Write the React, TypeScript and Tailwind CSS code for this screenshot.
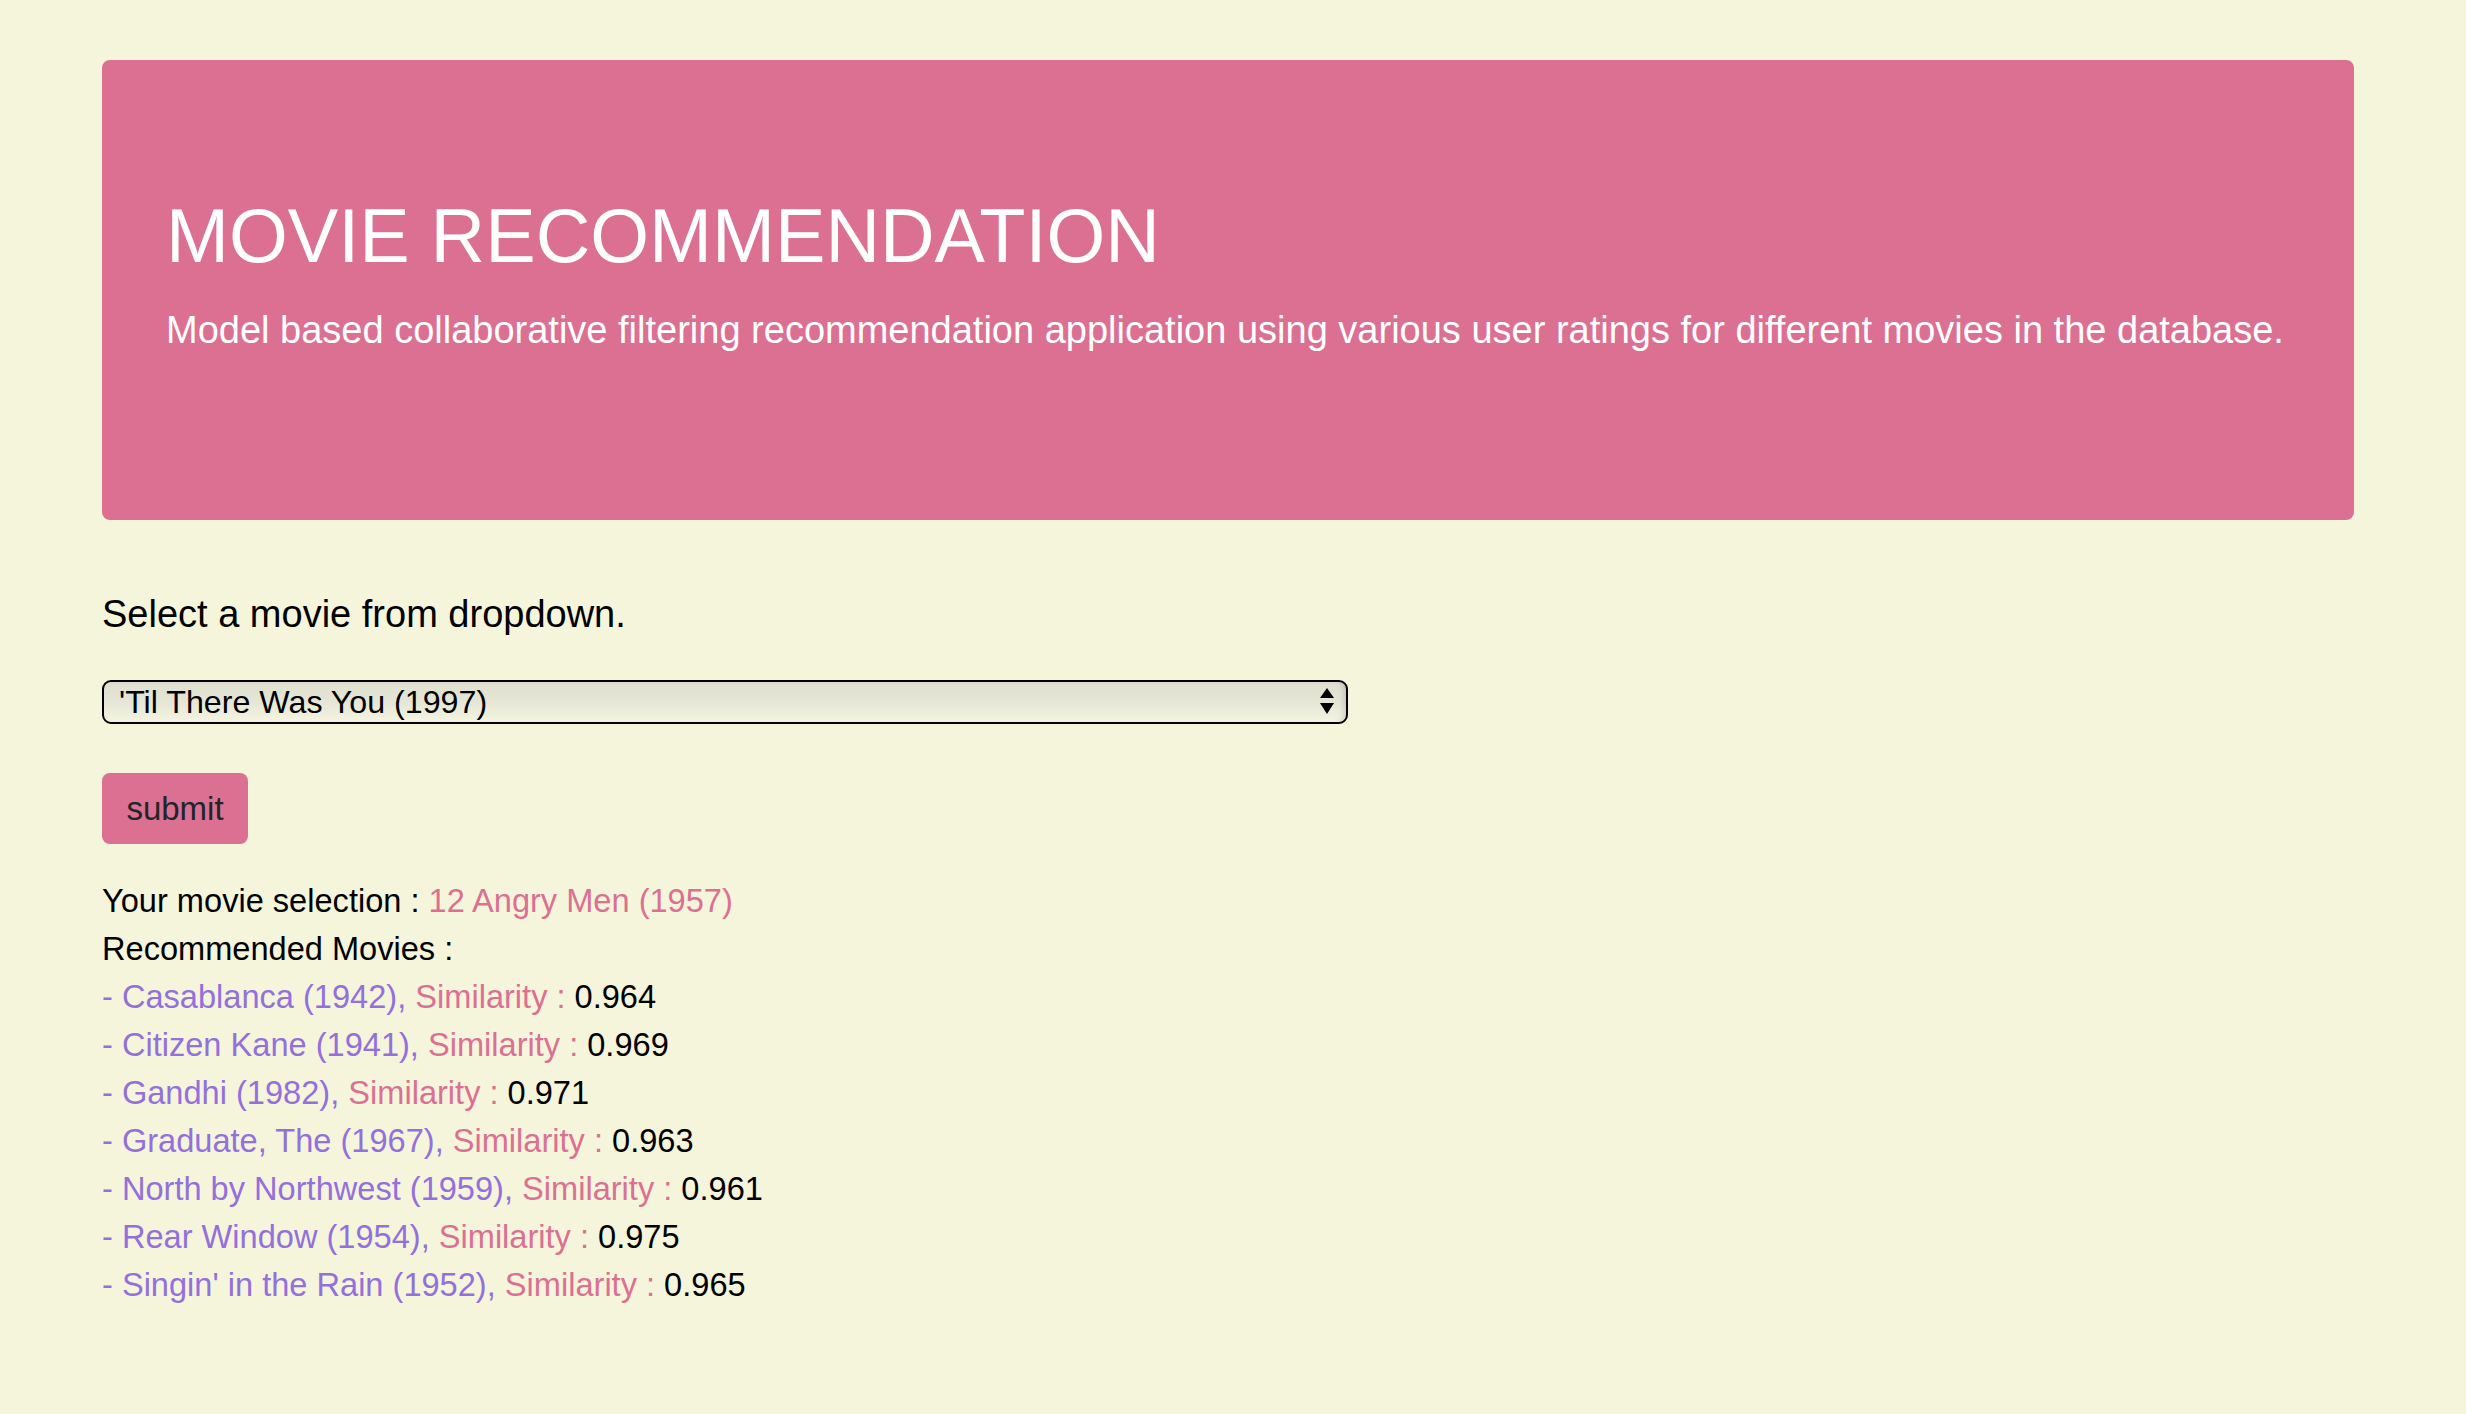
import React, { useState } from 'react';

const recommendations = [
  { title: 'Casablanca (1942)', score: '0.964' },
  { title: 'Citizen Kane (1941)', score: '0.969' },
  { title: 'Gandhi (1982)', score: '0.971' },
  { title: 'Graduate, The (1967)', score: '0.963' },
  { title: 'North by Northwest (1959)', score: '0.961' },
  { title: 'Rear Window (1954)', score: '0.975' },
  { title: "Singin' in the Rain (1952)", score: '0.965' },
];

const movies = ["'Til There Was You (1997)", '12 Angry Men (1957)', 'Casablanca (1942)'];

const App: React.FC = () => {
  const [movie, setMovie] = useState(movies[0]);

  return (
    <div className="min-h-screen bg-[#f5f5dc] font-['Liberation_Sans',Arial,sans-serif] text-black">
      <div className="ml-[102px] w-[2252px] pt-[60px] pb-[60px]">
        {/* Header */}
        <div className="bg-[#db7093] rounded-[8px] px-[64px] py-[128px] mb-[64px]">
          <h1 className="text-[75.6px] leading-[96px] text-white mb-[16px]">MOVIE RECOMMENDATION</h1>
          <p className="text-[38px] leading-[60px] text-white mb-[32px]">
            Model based collaborative filtering recommendation application using various user ratings for different movies in the database.
          </p>
        </div>

        <p className="text-[38px] leading-[60px]">Select a movie from dropdown.</p>

        <div className="relative mt-[36px] w-[1246px]">
          <select
            value={movie}
            onChange={e => setMovie(e.target.value)}
            className="appearance-none w-full h-[44px] border-2 border-black rounded-[9px] pl-[15px] text-[32.2px] leading-[40px] text-black bg-gradient-to-b from-[#dfdfd0] via-[#e6e6d6] to-[#f4f4e0] shadow-[inset_-6px_0_6px_-4px_rgba(0,0,0,0.15)] outline-none font-['Liberation_Sans',Arial,sans-serif]"
          >
            {movies.map(m => (
              <option key={m} value={m}>{m}</option>
            ))}
          </select>
          <div className="absolute right-[14px] top-[8px] flex flex-col items-center gap-[5px] pointer-events-none">
            <svg width="14" height="10" viewBox="0 0 14 10"><path d="M7 0 L14 10 L0 10 Z" fill="#000" /></svg>
            <svg width="14" height="11" viewBox="0 0 14 11"><path d="M0 0 L14 0 L7 11 Z" fill="#000" /></svg>
          </div>
        </div>

        <button className="mt-[49px] h-[71px] w-[146px] rounded-[8px] bg-[#db7093] text-[#212529] text-[33px] flex items-center justify-center">
          submit
        </button>

        {/* Results */}
        <div className="mt-[33px] text-[32.6px] leading-[48px]">
          <div>
            Your movie selection : <span className="text-[#db7093]">12 Angry Men (1957)</span>
          </div>
          <div>Recommended Movies :</div>
          {recommendations.map(r => (
            <div key={r.title}>
              <span className="text-[#9370db]">- {r.title}, </span>
              <span className="text-[#db7093]">Similarity : </span>
              <span>{r.score}</span>
            </div>
          ))}
        </div>
      </div>
    </div>
  );
};

export default App;
